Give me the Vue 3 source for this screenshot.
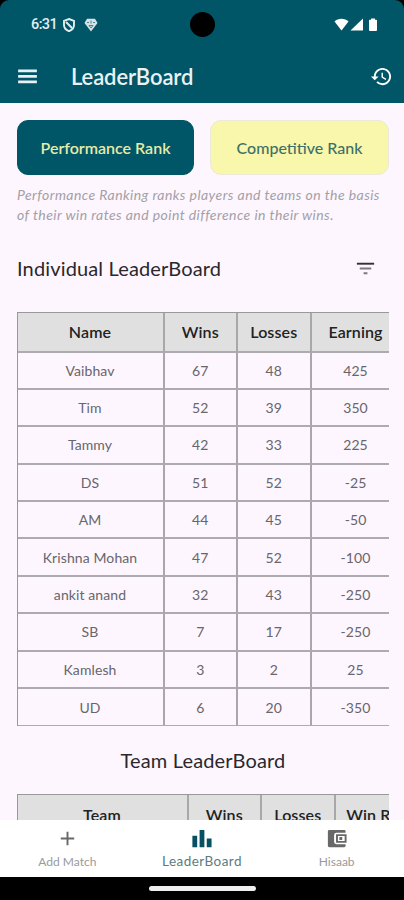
<template>
  <div class="screen">
    <header class="topBar">
      <div class="statusBar">
        <span class="time">6:31</span>
        <svg class="shield" viewBox="0 0 12 14">
          <path d="M6 1 11 2.8V7c0 3-2 5-5 6.2C3 12 1 10 1 7V2.8z" />
          <path d="M3 4l6 6" />
        </svg>
        <svg class="badge" viewBox="0 0 14 14">
          <path class="fill" d="M3 .8h8L13.5 5 7 13.5.5 5z" />
          <path class="cut" d="M3 4.500h2M9 4.500h2M7 2.500v3M5 7.500h4L7 10z" />
        </svg>
        <span class="camera"></span>
        <svg class="signals" viewBox="0 0 44 14">
          <path d="M.5 3.500C4-.1 11-.1 14.500 3.500L7.500 12.500z" />
          <path d="M29 .5v12H16.500z" />
          <path d="M37 .5h4v1.300h1.200q.8 0 .8.8v9.500q0 .9-.9.9h-6.200q-.9 0-.9-.9V2.600q0-.8.800-.8H37z" />
        </svg>
      </div>
      <div class="appBar">
        <svg class="menuIcon" viewBox="0 0 24 24">
          <path d="M3 18.500h18v-2.700H3zm0-5.200h18v-2.700H3zM3 5.300v2.700h18V5.300z" />
        </svg>
        <h1>LeaderBoard</h1>
        <svg class="historyIcon" viewBox="0 0 24 24">
          <path d="M13 3c-4.970 0-9 4.030-9 9H1l3.890 3.890.07.14L9 12H6c0-3.870 3.130-7 7-7s7 3.130 7 7-3.130 7-7 7c-1.930 0-3.680-.79-4.940-2.060l-1.420 1.420C8.270 19.990 10.510 21 13 21c4.970 0 9-4.030 9-9s-4.030-9-9-9zm-1 5v5l4.280 2.540.72-1.210-3.500-2.080V8z" />
        </svg>
      </div>
    </header>

    <main class="content">
      <div class="tabs">
        <button
          v-for="t in tabs"
          :key="t"
          class="tab"
          :class="{ active: t === activeTab }"
          @click="activeTab = t"
        >{{ t }}</button>
      </div>
      <p class="hint">Performance Ranking ranks players and teams on the basis<br />of their win rates and point difference in their wins.</p>

      <div class="sectionHead">
        <h2>Individual LeaderBoard</h2>
        <svg class="filterIcon" viewBox="0 0 24 24">
          <path class="dark" d="M3 6h18v2H3z" />
          <path d="M6 11h12v2H6zm4 5h4v2h-4z" />
        </svg>
      </div>

      <!-- tables are wider than the screen and get cut off on the right -->
      <div class="tableWrap">
        <div class="table">
          <div class="row headerRow">
            <div v-for="h in ['Name', 'Wins', 'Losses', 'Earning']" :key="h" class="cell">{{ h }}</div>
          </div>
          <div v-for="p in players" :key="p.name" class="row">
            <div class="cell">{{ p.name }}</div>
            <div class="cell">{{ p.wins }}</div>
            <div class="cell">{{ p.losses }}</div>
            <div class="cell">{{ p.earning }}</div>
          </div>
        </div>
      </div>

      <h2 class="teamTitle">Team LeaderBoard</h2>
      <div class="tableWrap">
        <div class="table teamTable">
          <div class="row headerRow">
            <div v-for="h in ['Team', 'Wins', 'Losses', 'Win Rate']" :key="h" class="cell">{{ h }}</div>
          </div>
        </div>
      </div>
    </main>

    <nav class="bottomNav">
      <div class="navItem">
        <svg viewBox="0 0 24 24"><path d="M11 5h2v6h6v2h-6v6h-2v-6H5v-2h6z" /></svg>
        <span>Add Match</span>
      </div>
      <div class="navItem selected">
        <svg viewBox="0 0 24 24"><path d="M2.500 9h5v12h-5zM10 3h5v18h-5zM17.500 12h5v9h-5z" /></svg>
        <span>LeaderBoard</span>
      </div>
      <div class="navItem">
        <svg viewBox="0 0 24 24">
          <path fill-rule="evenodd" d="M4.500 3H20q1.500 0 1.500 1.500V6H12q-2.500 0-2.500 2.500v7q0 2.500 2.500 2.500h9.500v1.500q0 1.500-1.500 1.500H4.500Q3 21 3 19.500v-15Q3 3 4.500 3zM11.500 7.500h11v9h-11zM13.500 9.500v5h7v-5zM15 10.500h3v3h-3z" />
        </svg>
        <span>Hisaab</span>
      </div>
    </nav>
    <div class="gestureBar"><span></span></div>
  </div>
</template>

<script setup>
import { ref } from "vue"

const tabs = ["Performance Rank", "Competitive Rank"]
const activeTab = ref("Performance Rank")

const players = ref([
  { name: "Vaibhav", wins: 67, losses: 48, earning: 425 },
  { name: "Tim", wins: 52, losses: 39, earning: 350 },
  { name: "Tammy", wins: 42, losses: 33, earning: 225 },
  { name: "DS", wins: 51, losses: 52, earning: -25 },
  { name: "AM", wins: 44, losses: 45, earning: -50 },
  { name: "Krishna Mohan", wins: 47, losses: 52, earning: -100 },
  { name: "ankit anand", wins: 32, losses: 43, earning: -250 },
  { name: "SB", wins: 7, losses: 17, earning: -250 },
  { name: "Kamlesh", wins: 3, losses: 2, earning: 25 },
  { name: "UD", wins: 6, losses: 20, earning: -350 },
])
</script>

<style>
body {
  background: #000;
}
</style>

<style scoped>
.screen {
  width: 404px;
  height: 900px;
  display: flex;
  flex-direction: column;
  overflow: hidden;
  background: #000;
  font-family: Lato, sans-serif;
}

/* 頂部 */
.topBar {
  flex: none;
  height: 103px;
  box-sizing: border-box;
  background: #005566;
  border-radius: 9px 9px 0 0;
}
.statusBar {
  height: 49px;
  display: flex;
  align-items: center;
  padding: 0 26px 0 31px;
  position: relative;
}
.time {
  width: 32px;
  font: 500 14.5px Roboto, sans-serif;
  letter-spacing: -0.6px;
  color: #e3edf0;
}
.shield {
  width: 12px;
  height: 14px;
  fill: none;
  stroke: #e3edf0;
  stroke-width: 1.9;
}
.badge {
  width: 14px;
  height: 14px;
  margin-left: 9px;
}
.badge .fill {
  fill: #d5e3e7;
}
.badge .cut {
  fill: none;
  stroke: #4b8390;
  stroke-width: 1;
}
.camera {
  position: absolute;
  left: 190px;
  top: 12px;
  width: 25px;
  height: 25px;
  border-radius: 50%;
  background: #000;
}
.signals {
  width: 44px;
  height: 14px;
  margin-left: auto;
  fill: #fff;
}
.appBar {
  height: 54px;
  display: flex;
  align-items: center;
  padding: 0 11px 0 15px;
}
.menuIcon {
  width: 25px;
  height: 25px;
  fill: #e8f0f4;
}
h1 {
  margin: 0 0 0 31px;
  font-size: 22px;
  font-weight: 600;
  letter-spacing: -0.1px;
  color: #eaf2f5;
}
.historyIcon {
  width: 23px;
  height: 23px;
  margin-left: auto;
  fill: #fff;
}

/* 內容 */
.content {
  flex: 1;
  min-height: 0;
  overflow: hidden;
  padding: 17px 15px 0 17px;
  background: #fdf6fe;
}
.tabs {
  display: grid;
  grid-template-columns: 177px 179px;
  justify-content: space-between;
}
.tab {
  height: 55px;
  padding: 0;
  border: 1px solid #ebe9d8;
  border-radius: 11px;
  background: #f9f7ab;
  color: #3f7068;
  font: 500 16px Lato, sans-serif;
}
.tab.active {
  border-color: #005566;
  background: #005566;
  color: #e6eba8;
  font-weight: 600;
}
.hint {
  margin: 10px 0 0;
  font-size: 14px;
  line-height: 20px;
  letter-spacing: 0.43px;
  font-style: italic;
  color: #a39fa6;
  white-space: nowrap;
}
h2 {
  margin: 0;
  font-size: 20px;
  font-weight: 400;
  line-height: 24px;
  letter-spacing: 0.15px;
  color: #2b282d;
}
.sectionHead {
  display: flex;
  justify-content: space-between;
  align-items: center;
  padding-right: 12px;
  margin: 31px 0 32px;
}
.filterIcon {
  width: 23px;
  height: 23px;
  fill: #7c797f;
}
.filterIcon .dark {
  fill: #333036;
}

/* 表格 */
.tableWrap {
  overflow: hidden;
}
.table {
  width: 400px;
  margin-left: -0.5px;
  border-top: 1px solid #999;
  border-left: 1px solid #999;
}
.row {
  display: grid;
  grid-template-columns: 147px 73.5px 73.5px 90px;
  height: 37.4px;
}
.headerRow {
  height: 39.5px;
}
.cell {
  display: flex;
  align-items: center;
  justify-content: center;
  box-sizing: border-box;
  border-right: 2px solid #a9a7aa;
  border-bottom: 2px solid #aeabb0;
  font-size: 14px;
  letter-spacing: 0.1px;
  color: #68656b;
  white-space: nowrap;
}
.row:last-child .cell {
  border-bottom-width: 1px;
}
.headerRow .cell {
  background: #e0e0e0;
  font-size: 16px;
  font-weight: 600;
  color: #222;
}
.teamTitle {
  margin: 22px 0;
  text-align: center;
}
.teamTable .row {
  grid-template-columns: 171px 73.5px 73.5px 90px;
}

/* 底部導覽 */
.bottomNav {
  flex: none;
  height: 57px;
  display: grid;
  grid-template-columns: repeat(3, 1fr);
  background: #fff;
}
.navItem {
  display: flex;
  flex-direction: column;
  align-items: center;
  padding-top: 7px;
  font-size: 12px;
  line-height: 16px;
  color: #9a9a9a;
}
.navItem svg {
  width: 23px;
  height: 23px;
  margin-bottom: 4px;
  fill: #686868;
}
.navItem.selected {
  font-size: 13.5px;
  letter-spacing: 0.45px;
  color: #5c7b83;
}
.navItem.selected svg {
  margin-bottom: 3px;
  fill: #075064;
}
.gestureBar {
  flex: none;
  height: 23px;
  display: flex;
  justify-content: center;
  padding-top: 9px;
  box-sizing: border-box;
  background: #000;
}
.gestureBar span {
  width: 107px;
  height: 5px;
  border-radius: 3px;
  background: #eee;
}
</style>
